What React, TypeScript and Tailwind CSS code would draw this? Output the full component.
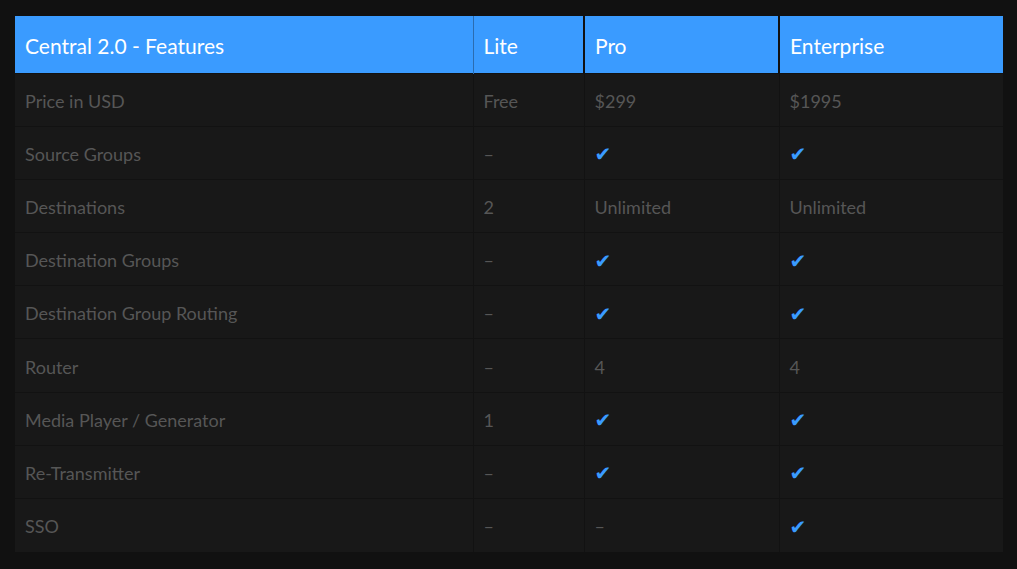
const COLS = ["Central 2.0 - Features", "Lite", "Pro", "Enterprise"];

const CHECK = "check";

const ROWS: string[][] = [
  ["Price in USD", "Free", "$299", "$1995"],
  ["Source Groups", "–", CHECK, CHECK],
  ["Destinations", "2", "Unlimited", "Unlimited"],
  ["Destination Groups", "–", CHECK, CHECK],
  ["Destination Group Routing", "–", CHECK, CHECK],
  ["Router", "–", "4", "4"],
  ["Media Player / Generator", "1", CHECK, CHECK],
  ["Re-Transmitter", "–", CHECK, CHECK],
  ["SSO", "–", "–", CHECK],
];

const widths = ["w-[458px]", "w-[111px]", "w-[195px]", "w-[224px]"];

function Cell({ value }: { value: string }) {
  if (value === CHECK) {
    return (
      <span className="text-[20px] text-[#3a9bff]" style={{ fontFamily: "'DejaVu Sans', sans-serif" }}>
        ✔
      </span>
    );
  }
  return <span>{value}</span>;
}

export default function App() {
  return (
    <div className="min-h-[569px] w-full bg-[#111111] pt-4 pl-[15px]" style={{ fontFamily: "Lato, 'Noto Sans', sans-serif" }}>
      <table className="w-[988px] table-fixed border-collapse">
        <thead>
          <tr className="h-[57px] bg-[#3a9bff]">
            {COLS.map((c, i) => (
              <th
                key={c}
                className={`${widths[i]} px-[10px] pt-[2px] text-left text-[21px] font-normal text-white ${
                  i === 1 ? "border-l border-[#2b6cb0]" : ""
                } ${i >= 2 ? "border-l-2 border-[#111111]" : ""}`}
              >
                {c}
              </th>
            ))}
          </tr>
        </thead>
        <tbody>
          {ROWS.map((row, r) => (
            <tr key={r} className="h-[53.2px] border-t border-[#121212] bg-[#181818]">
              {row.map((v, i) => (
                <td
                  key={i}
                  className={`px-[10px] pt-[3px] text-[18px] text-[#565656] ${i > 0 ? "border-l border-[#121212]" : ""}`}
                >
                  <Cell value={v} />
                </td>
              ))}
            </tr>
          ))}
        </tbody>
      </table>
    </div>
  );
}
